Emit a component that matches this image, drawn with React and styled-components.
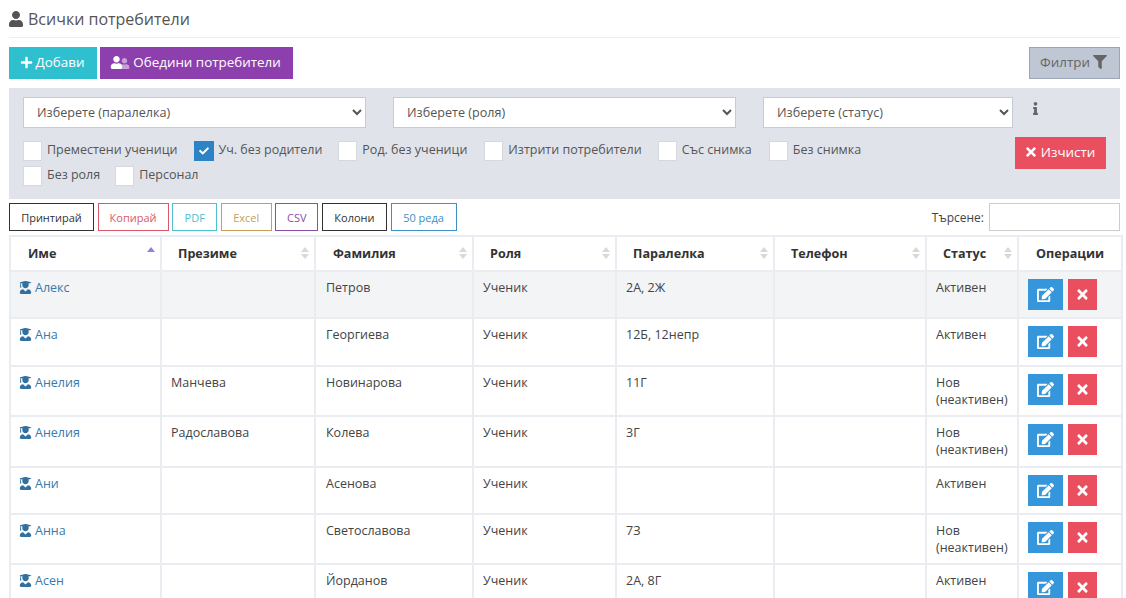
import React from 'react'
import styled, { createGlobalStyle } from 'styled-components'
import { FaUser, FaPlus, FaFilter, FaInfo, FaTimes, FaEdit, FaUserGraduate, FaCheck } from 'react-icons/fa'

const Global = createGlobalStyle`
html, body {
  margin: 0;
  height: 598px;
  overflow: hidden;
  background: #fff;
  font-family: "Open Sans", "Liberation Sans", sans-serif;
  font-size: 12.5px;
  color: #444;
}
* { box-sizing: border-box; }
`
const Page = styled.div`
  padding: 0 6px 0 9px;
`
const Title = styled.h1`
  display: flex;
  align-items: center;
  gap: 4px;
  height: 38px;
  margin: 0;
  font-size: 16px;
  font-weight: 400;
  color: #555;
  border-bottom: 1px solid #eceef1;
  svg { margin-left: -1px; }
`
const Toolbar = styled.div`
  display: flex;
  gap: 3px;
  margin-top: 9px;
`
const Btn = styled.button`
  display: inline-flex;
  align-items: center;
  justify-content: center;
  gap: 3px;
  height: 32px;
  padding: 0 2px 2px 0;
  width: ${props => props.w}px;
  border: 0;
  font-family: inherit;
  font-size: 13.4px;
  color: #fff;
  background: ${props => props.bg};
`
const FilterBtn = styled(Btn)`
  margin-left: auto;
  background: #bfc6d4;
  border: 1px solid #9aa5b8;
  color: #666;
`
const Friends = styled.span`
  display: inline-flex;
  align-items: flex-end;
  svg:first-child { position: relative; z-index: 1; }
  svg + svg { margin-left: -4px; opacity: .5; }
`
const Panel = styled.div`
  position: relative;
  height: 111px;
  margin-top: 9px;
  padding: 9px 14px 0;
  background: #e0e4ea;
`
const Selects = styled.div`
  display: flex;
  gap: 27px;
  align-items: flex-start;
`
const Select = styled.select`
  width: ${props => props.w}px;
  height: 31px;
  padding: 0 9px 1px;
  background: #fff;
  border: 1px solid #c7ccd4;
  border-radius: 0;
  font-family: inherit;
  font-size: 12.6px;
  color: #555;
`
const Info = styled.span`
  margin: 3px 0 0 -11px;
  color: #666;
  font-size: 14px;
`
const Checks = styled.div`
  display: flex;
  flex-wrap: wrap;
  width: 880px;
  margin-top: 12px;
  row-gap: 3px;
`
const Check = styled.label`
  display: flex;
  align-items: center;
  gap: 5px;
  height: 22px;
  margin-right: ${props => props.mr}px;
  font-size: 12.5px;
  color: #555;
`
const CheckText = styled.span`
  margin-bottom: 4px;
`
const Box = styled.span`
  display: flex;
  align-items: center;
  justify-content: center;
  width: ${props => (props.on ? 20 : 19)}px;
  height: 20px;
  margin-right: ${props => (props.on ? -1 : 0)}px;
  background: ${props => (props.on ? '#2b84c6' : '#fff')};
  border: 1px solid ${props => (props.on ? '#2b84c6' : '#d5d9df')};
  color: #fff;
  font-size: 10px;
`
const ClearBtn = styled(Btn)`
  position: absolute;
  right: 14px;
  top: 49px;
`
const TableBar = styled.div`
  display: flex;
  align-items: center;
  gap: 3.6px;
  margin-top: 4px;
`
const DtBtn = styled.button`
  height: 28px;
  width: ${props => props.w}px;
  padding: 0;
  background: #fff;
  border: 1px solid ${props => props.c};
  color: ${props => props.c};
  font-family: inherit;
  font-size: 11px;
`
const Search = styled.label`
  display: flex;
  align-items: center;
  gap: 5px;
  margin-left: auto;
  font-size: 12px;
  color: #444;
`
const SearchInput = styled.input`
  width: 131px;
  height: 28px;
  border: 1px solid #ccc;
  background: #fff;
`
const Table = styled.table`
  width: 1112px;
  margin: 4px 0 0;
  border-collapse: collapse;
  table-layout: fixed;
  border: 2px solid #e9edf2;
`
const Th = styled.th`
  position: relative;
  height: 35px;
  padding: 0 0 1px ${props => props.pl}px;
  border: 2px solid #e9edf2;
  text-align: left;
  font-size: 12.6px;
  font-weight: 700;
  color: #333;
`
const Sort = styled.span`
  position: absolute;
  right: 5px;
  top: 10px;
  display: flex;
  flex-direction: column;
  gap: 2px;
  &::before, &::after {
    content: "";
    border-left: 4px solid transparent;
    border-right: 4px solid transparent;
  }
  &::before { border-bottom: 5px solid ${props => (props.active ? '#8a85d6' : '#d9d9d9')}; }
  &::after { border-top: 5px solid ${props => (props.active ? 'transparent' : '#d9d9d9')}; }
`
const Tr = styled.tr`
  background: ${props => (props.odd ? '#f2f4f6' : '#fff')};
`
const Td = styled.td`
  height: ${props => props.h}px;
  padding: 7px 9px 0 ${props => props.pl || 9}px;
  border: 2px solid #e9edf2;
  vertical-align: top;
  line-height: 17px;
  color: #444;
`
const NameLink = styled.a`
  display: flex;
  align-items: center;
  gap: 3px;
  margin-left: -1px;
  color: #3a78ad;
  svg { color: #31709f; }
`
const Ops = styled.div`
  display: flex;
  gap: 5px;
`
const IconBtn = styled.button`
  display: flex;
  align-items: center;
  justify-content: center;
  width: ${props => props.w}px;
  height: 31px;
  padding: 0;
  border: 0;
  background: ${props => props.bg};
  color: #fff;
`

const columns = [
  { name: 'Име', w: 151, pl: 17, active: true },
  { name: 'Презиме', w: 154, pl: 16 },
  { name: 'Фамилия', w: 158, pl: 17 },
  { name: 'Роля', w: 143, pl: 16 },
  { name: 'Паралелка', w: 158, pl: 16 },
  { name: 'Телефон', w: 152, pl: 16 },
  { name: 'Статус', w: 92, pl: 16 },
  { name: 'Операции', w: 104, pl: 17, noSort: true },
]
const rows = [
  ['Алекс', '', 'Петров', '2А, 2Ж', 'Активен', 47],
  ['Ана', '', 'Георгиева', '12Б, 12непр', 'Активен', 48],
  ['Анелия', 'Манчева', 'Новинарова', '11Г', 'Нов (неактивен)', 50],
  ['Анелия', 'Радославова', 'Колева', '3Г', 'Нов (неактивен)', 51],
  ['Ани', '', 'Асенова', '', 'Активен', 47],
  ['Анна', '', 'Светославова', '7З', 'Нов (неактивен)', 50],
  ['Асен', '', 'Йорданов', '2А, 8Г', 'Активен', 47],
]
const checks = [
  ['Преместени ученици', 17],
  ['Уч. без родители', 16, true],
  ['Род. без ученици', 17],
  ['Изтрити потребители', 16],
  ['Със снимка', 17],
  ['Без снимка', 0],
  ['Без роля', 15],
  ['Персонал', 0],
]
const dtButtons = [
  ['Принтирай', '#333', 85],
  ['Копирай', '#d9596a', 71],
  ['PDF', '#4fc0cc', 45],
  ['Excel', '#c2a25a', 51],
  ['CSV', '#8a4fa8', 43],
  ['Колони', '#333', 65],
  ['50 реда', '#3d8fc6', 66],
]

const App = () => (
  <Page>
    <Global />
    <Title><FaUser size={16} />Всички потребители</Title>
    <Toolbar>
      <Btn w={88} bg="#2fc0d0"><FaPlus size={13} />Добави</Btn>
      <Btn w={193} bg="#8e3fae">
        <Friends><FaUser size={13} /><FaUser size={11} /></Friends>
        Обедини потребители
      </Btn>
      <FilterBtn w={91}>Филтри<FaFilter size={14} /></FilterBtn>
    </Toolbar>
    <Panel>
      <Selects>
        <Select w={343}><option>Изберете (паралелка)</option></Select>
        <Select w={343}><option>Изберете (роля)</option></Select>
        <Select w={250}><option>Изберете (статус)</option></Select>
        <Info><FaInfo size={13} /></Info>
      </Selects>
      <Checks>
        {checks.map(([label, mr, on]) => (
          <Check key={label} mr={mr}>
            <Box on={on}>{on && <FaCheck />}</Box>
            <CheckText>{label}</CheckText>
          </Check>
        ))}
      </Checks>
      <ClearBtn w={91} bg="#e94f5e"><FaTimes size={14} />Изчисти</ClearBtn>
    </Panel>
    <TableBar>
      {dtButtons.map(([label, c, w]) => (
        <DtBtn key={label} c={c} w={w}>{label}</DtBtn>
      ))}
      <Search>Търсене:<SearchInput /></Search>
    </TableBar>
    <Table>
      <colgroup>
        {columns.map(col => <col key={col.name} width={col.w} />)}
      </colgroup>
      <thead>
        <tr>
          {columns.map(col => (
            <Th key={col.name} pl={col.pl}>
              {col.name}
              {!col.noSort && <Sort active={col.active} />}
            </Th>
          ))}
        </tr>
      </thead>
      <tbody>
        {rows.map((r, i) => (
          <Tr key={r[2]} odd={i === 0}>
            <Td h={r[5]}><NameLink><FaUserGraduate size={13} />{r[0]}</NameLink></Td>
            <Td h={r[5]}>{r[1]}</Td>
            <Td h={r[5]} pl={10}>{r[2]}</Td>
            <Td h={r[5]}>Ученик</Td>
            <Td h={r[5]}>{r[3]}</Td>
            <Td h={r[5]}></Td>
            <Td h={r[5]}>{r[4]}</Td>
            <Td h={r[5]}>
              <Ops>
                <IconBtn w={35} bg="#3596dc"><FaEdit size={17} /></IconBtn>
                <IconBtn w={29} bg="#e94f5e"><FaTimes size={15} /></IconBtn>
              </Ops>
            </Td>
          </Tr>
        ))}
      </tbody>
    </Table>
  </Page>
)
export default App
